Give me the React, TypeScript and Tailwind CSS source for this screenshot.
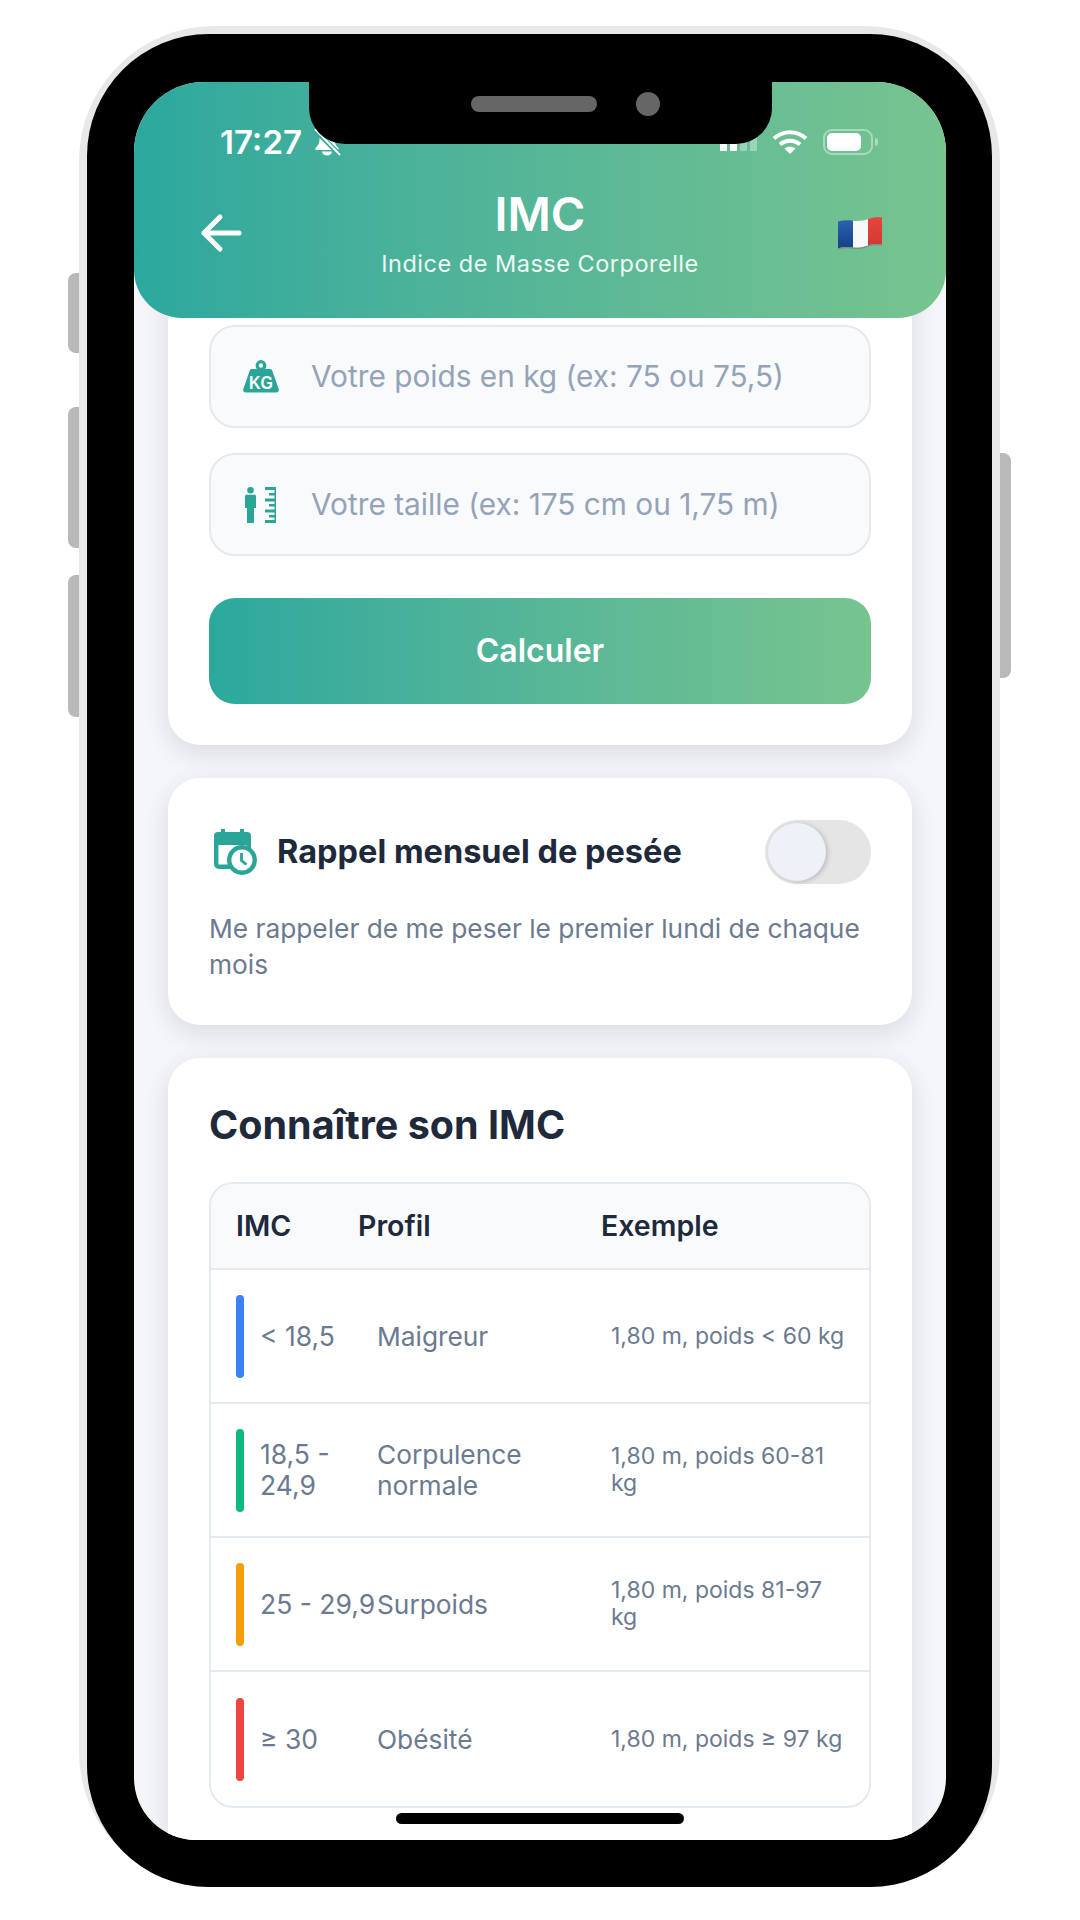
import React from "react";

const teal = "#2ba598";

function BellSlash() {
  return (
    <svg width="30" height="30" viewBox="0 0 30 30">
      <path d="M15 4c-5 0-7.500 3.500-7.500 8 0 5-2 7-4 9v2h23v-2c-2-2-4-4-4-9 0-4.500-2.500-8-7.500-8z" fill="#fff" />
      <path d="M10 24.500a5 4 0 0 0 10 0z" fill="#fff" />
      <path d="M3 3l25 25" stroke="#33aa9b" strokeWidth="5" />
      <path d="M3 2l25 26" stroke="#fff" strokeWidth="2.200" />
    </svg>
  );
}

function Signal() {
  const bars = [
    { h: 8, o: 1 },
    { h: 11, o: 1 },
    { h: 14, o: 0.35 },
    { h: 17, o: 0.35 },
  ];
  return (
    <div className="flex items-end gap-[3px] h-[17px]">
      {bars.map((b, i) => (
        <div key={i} className="w-[7px] rounded-[1px] bg-white" style={{ height: b.h, opacity: b.o }} />
      ))}
    </div>
  );
}

function Wifi() {
  return (
    <svg width="36" height="26" viewBox="0 0 36 26" fill="none" stroke="#fff" strokeWidth="4">
      <path d="M2 9.500C11 1 25 1 34 9.500" />
      <path d="M8 15.500c6-5 14-5 20 0" />
      <path d="M18 25l-5.500-5.500c3-2.500 8-2.500 11 0z" fill="#fff" stroke="none" />
    </svg>
  );
}

function Battery() {
  return (
    <div className="flex items-center gap-[2px]">
      <div className="w-[50px] h-[26px] rounded-[9px] border-2 border-white/40 p-[2px] flex">
        <div className="w-[34px] rounded-[5px] bg-white" />
      </div>
      <div className="w-[3px] h-[8px] rounded-r-full bg-white/40" />
    </div>
  );
}

function Flag() {
  return (
    <svg width="44" height="34" viewBox="0 0 44 34">
      <defs>
        <linearGradient id="fb" x1="0" x2="0" y1="0" y2="1">
          <stop offset="0" stopColor="#2a62b0" />
          <stop offset="1" stopColor="#173f85" />
        </linearGradient>
        <linearGradient id="fr" x1="0" x2="0" y1="0" y2="1">
          <stop offset="0" stopColor="#e8453c" />
          <stop offset="1" stopColor="#cf3a30" />
        </linearGradient>
      </defs>
      <path d="M0 5.500c5-1.500 10-1.500 15-.8V31.500c-5-.8-10-.8-15 .8z" fill="url(#fb)" />
      <path d="M15 4.700c5 .6 10 .2 15-1.700v26.500c-5 1.800-10 2.500-15 2z" fill="#f7f8fa" />
      <path d="M30 3c5-1.800 9.500-2.300 14-1.500V28.500c-4.500-.8-9-.5-14 1z" fill="url(#fr)" />
      <path d="M0 32.300c5-1.600 10-1.600 15-.8s10 0 15-2 9.500-1.800 14-1v1.200c-4.500-.8-9-1-14 1s-10 2.800-15 2-10-.8-15 .8z" fill="#7d8f86" />
    </svg>
  );
}

function WeightIcon() {
  return (
    <svg width="36" height="33" viewBox="0 0 36 33">
      <circle cx="18" cy="5.500" r="3.800" fill="none" stroke={teal} strokeWidth="3.200" />
      <path d="M9 9h18c1.200 0 2 .6 2.300 1.700L35.700 29c.5 2.200-.6 3.500-2.500 3.500H2.800C.9 32.500-.2 31.200.3 29L6.700 10.700C7 9.600 7.800 9 9 9z" fill={teal} />
      <text x="18" y="29" textAnchor="middle" fontFamily="'Liberation Sans', sans-serif" fontWeight="700" fontSize="18" textLength="24" lengthAdjust="spacingAndGlyphs" fill="#fff">KG</text>
    </svg>
  );
}

function HeightIcon() {
  return (
    <svg width="32" height="36" viewBox="0 0 32 36" fill={teal}>
      <circle cx="5.500" cy="3.300" r="3.300" />
      <path d="M1.800 7.800h7.400c1.200 0 1.800.6 1.800 1.800V21H9v15H2V21H0V9.600c0-1.200.6-1.800 1.800-1.800z" />
      <path d="M20 0h11v3H20zM24 6h7v2.600h-7zM20 11.500h11v3H20zM24 17h7v2.600h-7zM20 22.500h11v3H20zM24 28h7v2.600h-7zM20 33h11v3H20z" />
      <path d="M29.500 0H31v36h-1.500z" />
    </svg>
  );
}

function CalendarClock() {
  return (
    <svg width="43" height="46" viewBox="0 0 43 46" fill="none">
      <path d="M7 0h4v5H7zM26 0h4v5h-4z" fill={teal} />
      <path d="M4 3h29a4 4 0 0 1 4 4v9H0V7a4 4 0 0 1 4-4z" fill={teal} />
      <path d="M2.200 14v21a2.800 2.800 0 0 0 2.800 2.800h13M34.800 14v6" stroke={teal} strokeWidth="4.400" />
      <circle cx="28" cy="31" r="12.800" fill="#fff" stroke={teal} strokeWidth="4.400" />
      <path d="M27.500 24v7.500l5 4" stroke={teal} strokeWidth="2.800" />
    </svg>
  );
}

function Field({ icon, label }: { icon: React.ReactNode; label: string }) {
  return (
    <div className="flex h-[103px] items-center rounded-[26px] border-2 border-[#e5e9f0] bg-[#f8fafc] pl-[32px]">
      <div className="flex w-[36px] justify-center">{icon}</div>
      <span className="ml-[32px] text-[29.800px] leading-none text-[#94a3b8]">{label}</span>
    </div>
  );
}

const rows = [
  { c: "bg-[#3b82f6]", a: "< 18,5", b: "Maigreur", e: "1,80 m, poids < 60 kg" },
  { c: "bg-[#10b981]", a: "18,5 - 24,9", b: "Corpulence normale", e: "1,80 m, poids 60-81 kg" },
  { c: "bg-[#f59e0b]", a: "25 - 29,9", b: "Surpoids", e: "1,80 m, poids 81-97 kg" },
  { c: "bg-[#ef4444]", a: "≥ 30", b: "Obésité", e: "1,80 m, poids ≥ 97 kg" },
];

export default function App() {
  return (
    <div className="relative h-[1920px] w-[1080px] overflow-hidden bg-white font-[Inter,sans-serif]">
      <div className="absolute left-[68px] top-[273px] h-[80px] w-[12px] rounded-l-[8px] bg-[#b9b9b9]" />
      <div className="absolute left-[68px] top-[407px] h-[141px] w-[12px] rounded-l-[8px] bg-[#b9b9b9]" />
      <div className="absolute left-[68px] top-[575px] h-[142px] w-[12px] rounded-l-[8px] bg-[#b9b9b9]" />
      <div className="absolute left-[998px] top-[453px] h-[225px] w-[13px] rounded-r-[8px] bg-[#b9b9b9]" />

      <div className="absolute left-[79px] top-[26px] w-[921px] rounded-[135px] bg-[#e8e8e8] px-[8px] pt-[8px]">
        <div className="rounded-[122px] bg-black pb-[47px] pl-[47px] pr-[46px] pt-[48px]">
          <div className="relative h-[1758px] w-[812px] overflow-hidden rounded-t-[70px] rounded-b-[62px] bg-[#f4f5f9]">
            <div className="absolute left-[175px] top-0 z-20 h-[62px] w-[463px] rounded-b-[36px] bg-black">
              <div className="absolute left-[162px] top-[14px] h-[16px] w-[126px] rounded-full bg-[#666666]" />
              <div className="absolute left-[327px] top-[10px] h-[24px] w-[24px] rounded-full bg-[#666666]" />
            </div>

            <header className="relative z-10 h-[236px] rounded-b-[48px] bg-gradient-to-r from-[#2ba89e] to-[#77c48f] text-white">
              <div className="flex h-[34px] translate-y-[43px] items-center justify-between pl-[86px] pr-[68px]">
                <div className="flex items-center gap-[10px]">
                  <span className="text-[33px] font-semibold leading-none">17:27</span>
                  <BellSlash />
                </div>
                <div className="flex items-center gap-[15px]">
                  <Signal />
                  <Wifi />
                  <Battery />
                </div>
              </div>
              <div className="flex items-center justify-between pl-[66px] pr-[64px] pt-[69px]">
                <svg width="42" height="40" viewBox="0 0 42 40" fill="none" stroke="#fff" strokeWidth="5" strokeLinecap="round" strokeLinejoin="round">
                  <path d="M39 20H4M20 4L4 20l16 16" />
                </svg>
                <div className="flex flex-col items-center">
                  <span className="text-[47px] font-semibold leading-[58px]">IMC</span>
                  <span className="mt-[5px] text-[23.500px] leading-[32px] tracking-[0.5px] text-white/90">Indice de Masse Corporelle</span>
                </div>
                <Flag />
              </div>
            </header>

            <main className="-mt-[61px] flex flex-col gap-[33px] px-[34px]">
              <section className="rounded-b-[32px] bg-white px-[41px] pb-[41px] pt-[68px] shadow-[0_8px_24px_rgba(20,30,50,0.11)]">
                <div className="flex flex-col gap-[25px]">
                  <Field icon={<WeightIcon />} label="Votre poids en kg (ex: 75 ou 75,5)" />
                  <Field icon={<HeightIcon />} label="Votre taille (ex: 175 cm ou 1,75 m)" />
                </div>
                <button className="mt-[42px] h-[106px] w-full rounded-[26px] bg-gradient-to-r from-[#2ba89e] to-[#77c48f] text-[32px] font-semibold text-white">
                  Calculer
                </button>
              </section>

              <section className="rounded-[32px] bg-white px-[41px] pb-[42px] pt-[42px] shadow-[0_8px_24px_rgba(20,30,50,0.11)]">
                <div className="flex items-center">
                  <div className="ml-[5px]">
                    <CalendarClock />
                  </div>
                  <h2 className="ml-[20px] text-[32.500px] font-bold leading-none text-[#1e293b]">Rappel mensuel de pesée</h2>
                  <div className="ml-auto flex h-[64px] w-[106px] items-center rounded-full bg-[#e5e5e5] pl-[3px]">
                    <div className="h-[58px] w-[58px] rounded-full bg-[#eef1f7] shadow-[2px_1px_5px_rgba(0,0,0,0.18)]" />
                  </div>
                </div>
                <p className="mt-[27px] text-[26.300px] leading-[36px] text-[#6b7a90]">
                  Me rappeler de me peser le premier lundi de chaque mois
                </p>
              </section>

              <section className="rounded-[32px] bg-white px-[41px] pb-[90px] pt-[42px] shadow-[0_8px_24px_rgba(20,30,50,0.11)]">
                <h2 className="text-[39.500px] font-bold leading-[50px] text-[#1e293b]">Connaître son IMC</h2>
                <div className="mt-[32px] overflow-hidden rounded-[24px] border-2 border-[#e5e9f0]">
                  <div className="flex h-[86px] items-center border-b-2 border-[#e5e9f0] bg-[#f8fafc] pl-[25px] text-[28.500px] font-semibold text-[#1e293b]">
                    <span className="w-[122px]">IMC</span>
                    <span className="w-[243px]">Profil</span>
                    <span>Exemple</span>
                  </div>
                  {rows.map((r, i) => (
                    <div key={i} className={`flex h-[134px] items-center pl-[25px] ${i < 3 ? "border-b-2 border-[#e5e9f0]" : ""}`}>
                      <div className={`h-[83px] w-[8px] shrink-0 rounded-full ${r.c}`} />
                      <div className="ml-[16px] w-[117px] shrink-0 text-[26.500px] leading-[31px] text-[#6b7a90]">{r.a}</div>
                      <div className="w-[234px] shrink-0 text-[26.300px] leading-[31px] text-[#6b7a90]">{r.b}</div>
                      <div className="w-[235px] shrink-0 text-[23px] leading-[27px] text-[#6b7a90]">{r.e}</div>
                    </div>
                  ))}
                </div>
              </section>
            </main>

            <div className="absolute bottom-[16px] left-[262px] z-20 h-[11px] w-[288px] rounded-full bg-black" />
          </div>
        </div>
      </div>
    </div>
  );
}
